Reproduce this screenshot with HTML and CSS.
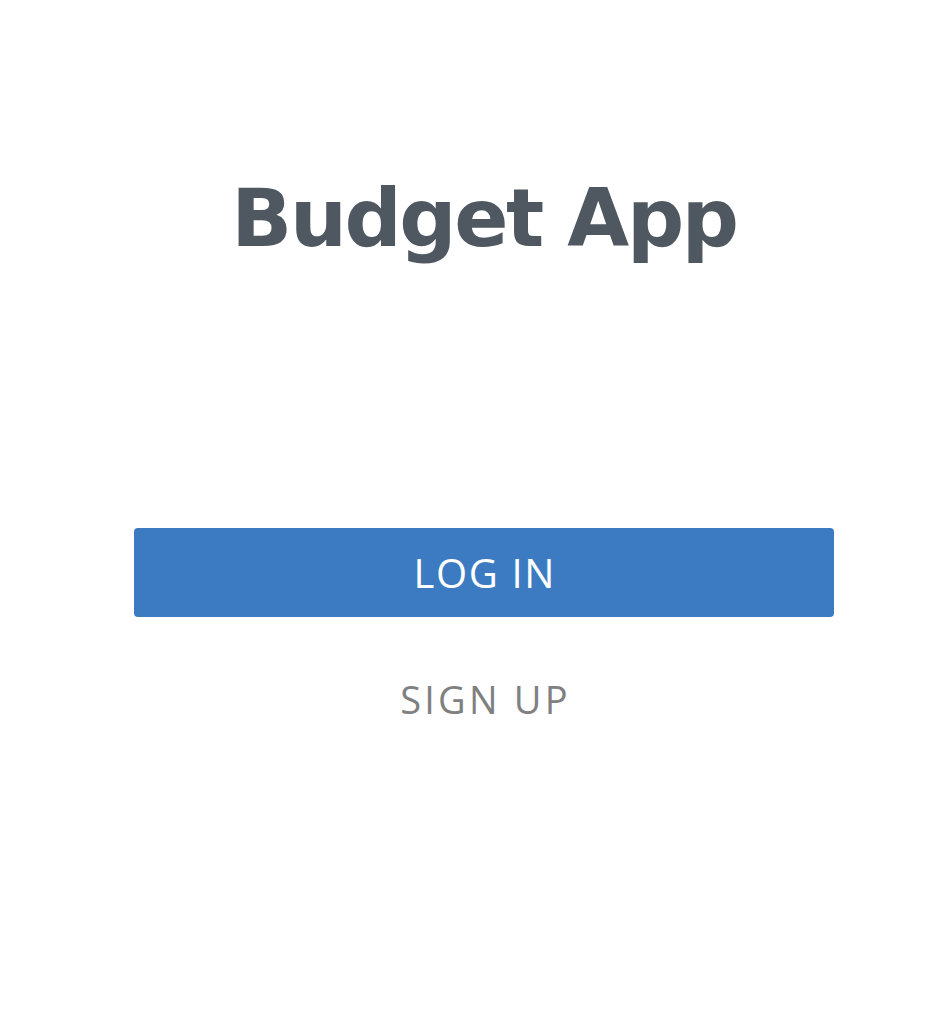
FILE: index.html
```html
<!DOCTYPE html>
<html lang="en">
<head>
<meta charset="utf-8">
<title>Budget App</title>
<link rel="stylesheet" href="styles.css">
</head>
<body>
<main class="page">
  <h1 class="title">Budget App</h1>
  <div class="actions">
    <button class="btn-login" type="button">LOG IN</button>
    <button class="btn-signup" type="button">SIGN UP</button>
  </div>
</main>
</body>
</html>
```
FILE: styles.css
```css
html, body {
  margin: 0;
  padding: 0;
  background: #ffffff;
}
.page {
  box-sizing: border-box;
  width: 952px;
  height: 1014px;
  padding-left: 16px;
  display: flex;
  flex-direction: column;
  align-items: center;
}
.title {
  margin: 169px 0 0;
  font-family: "DejaVu Sans", sans-serif;
  font-weight: 700;
  font-size: 80px;
  line-height: 100px;
  letter-spacing: -2.4px;
  color: #4f5860;
}
.actions {
  margin-top: 259px;
  width: 700px;
  display: flex;
  flex-direction: column;
  align-items: center;
}
.btn-login {
  width: 700px;
  height: 89px;
  border: none;
  border-radius: 4px;
  background: #3c7bc2;
  color: #ffffff;
  font-family: "Open Sans", sans-serif;
  font-weight: 400;
  font-size: 40px;
  letter-spacing: 1.6px;
  text-indent: 1.6px;
  padding: 0;
  cursor: pointer;
}
.btn-signup {
  margin-top: 57px;
  border: none;
  background: none;
  padding: 0 0 0 3px;
  color: #808080;
  font-family: "Open Sans", sans-serif;
  font-weight: 400;
  font-size: 38px;
  line-height: 50px;
  letter-spacing: 3.2px;
  cursor: pointer;
}
```
